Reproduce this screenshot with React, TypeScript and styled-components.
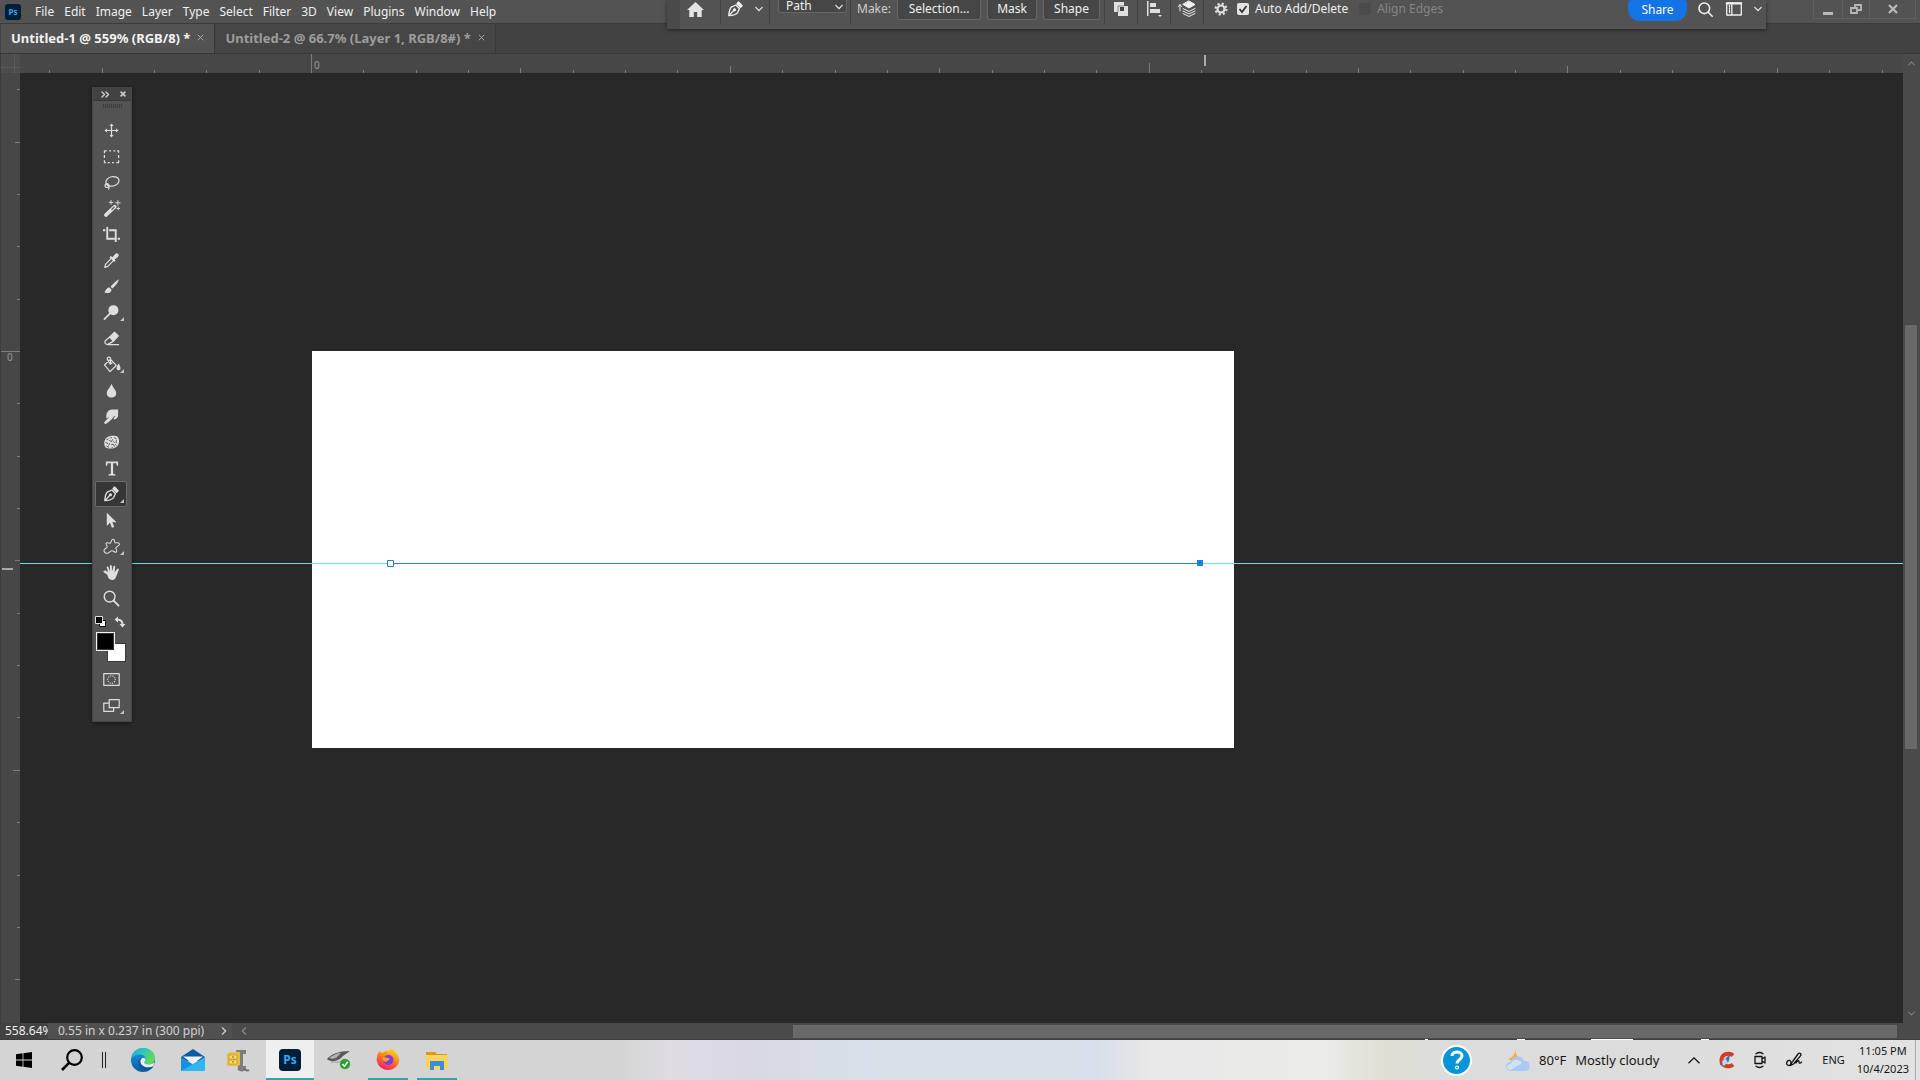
import React from "react";
import styled, { createGlobalStyle, css } from "styled-components";

const Global = createGlobalStyle`
  * { box-sizing: border-box; }
  html, body, #root { margin: 0; height: 100%; }
  body { overflow: hidden; background: #282828; font-family: "Noto Sans", "Segoe UI", sans-serif; }
  button, input, select { font: inherit; color: inherit; border: 0; padding: 0; margin: 0; background: none; }
  a { color: inherit; text-decoration: none; }
  svg { display: block; flex: none; overflow: visible; }
`;

const Desktop = styled.div`
  position: relative;
  display: flex;
  flex-direction: column;
  height: 100vh;
  font-size: 12px;
  line-height: 16px;
  color: #e8e8e8;
`;

const MenuBar = styled.header`
  display: flex;
  align-items: center;
  height: 24px;
  padding-left: 5px;
  background: #535353;
  border-bottom: 1px solid #3c3c3c;
`;

const PsBadge = styled.span<{ $size: number }>`
  display: flex;
  align-items: center;
  justify-content: center;
  width: ${(p) => p.$size}px;
  height: ${(p) => p.$size}px;
  border-radius: ${(p) => (p.$size > 18 ? 4 : 3)}px;
  background: #001e36;
  color: #31a8ff;
  font-weight: 700;
  font-size: ${(p) => (p.$size > 18 ? 12 : 8)}px;
  line-height: 1;
`;

const Menu = styled.nav`
  display: flex;
  gap: 10px;
  margin-left: 14px;
  button { white-space: nowrap; color: #f0f0f0; }
`;

const WindowButtons = styled.div`
  display: flex;
  align-self: flex-start;
  height: 19px;
  margin: 0 4px 0 auto;
  border: 1px solid #606060;
  border-top: 0;
`;

const WindowButton = styled.button<{ $w: number }>`
  display: flex;
  align-items: center;
  justify-content: center;
  width: ${(p) => p.$w}px;
  color: #b8b8b8;
  & + & { border-left: 1px solid #606060; }
`;

const Tabs = styled.div`
  display: flex;
  height: 30px;
  padding-left: 1px;
  background: #424242;
  border-bottom: 1px solid #383838;
`;

const Tab = styled.div<{ $active?: boolean }>`
  display: flex;
  align-items: center;
  gap: 7px;
  padding: 0 10px 2px;
  background: ${(p) => (p.$active ? "#535353" : "#454545")};
  color: ${(p) => (p.$active ? "#f2f2f2" : "#9d9d9d")};
  border-right: 1px solid #383838;
  font-size: 13px;
  font-weight: 700;
  white-space: nowrap;
`;

const TabClose = styled.button`
  display: flex;
  color: #b0b0b0;
`;

const OptionsBar = styled.section`
  position: absolute;
  z-index: 4;
  top: 0;
  left: 667px;
  right: 154px;
  display: flex;
  height: 29px;
  background: #535353;
  border-left: 13px solid #4a4a4a;
  box-shadow: 0 1px 4px rgba(0, 0, 0, 0.5);
  color: #f0f0f0;
`;

const Slot = styled.div<{ $w: number; $rule?: boolean; $start?: boolean }>`
  display: flex;
  align-items: center;
  justify-content: ${(p) => (p.$start ? "flex-start" : "center")};
  gap: 12px;
  width: ${(p) => p.$w}px;
  height: 24px;
  padding: 0 0 6px ${(p) => (p.$start ? 7 : 0)}px;
  flex: none;
  ${(p) => p.$rule && css`border-right: 1px solid #404040;`}
`;

const IconButton = styled.button`
  display: flex;
  align-items: center;
  justify-content: center;
`;

const PathSelect = styled.label`
  display: flex;
  align-items: flex-start;
  height: 24px;
  width: 81px;
  padding: 0 3px 0 8px;
  border-right: 1px solid #404040;
`;

const SelectFrame = styled.span`
  position: relative;
  display: flex;
  width: 69px;
  height: 13px;
  background: #464646;
  border: 1px solid #666;
  border-top: 0;
  border-radius: 0 0 3px 3px;
  select {
    appearance: none;
    width: 100%;
    height: 12px;
    padding-left: 7px;
    line-height: 12px;
    outline: 0;
  }
  svg { position: absolute; right: 3px; top: 3px; pointer-events: none; }
`;

const MakeGroup = styled.div`
  display: flex;
  align-items: flex-start;
  gap: 6px;
  width: 254px;
  height: 24px;
  padding-left: 6px;
  border-right: 1px solid #404040;
  color: #cfcfcf;
  line-height: 18px;
`;

const MakeButton = styled.button<{ $w: number }>`
  width: ${(p) => p.$w}px;
  height: 20px;
  padding-bottom: 2px;
  line-height: 18px;
  background: #464646;
  border: 1px solid #666;
  border-top: 0;
  border-radius: 0 0 3px 3px;
  color: #f0f0f0;
`;

const Check = styled.label<{ $off?: boolean }>`
  display: flex;
  align-items: center;
  gap: 6px;
  height: 18px;
  margin-right: 11px;
  white-space: nowrap;
  color: ${(p) => (p.$off ? "#858585" : "#f0f0f0")};
  input {
    appearance: none;
    width: 12px;
    height: 12px;
    border-radius: 2px;
    background: ${(p) => (p.$off ? "#4b4b4b" : "#e4e4e4")};
  }
  span { display: flex; position: relative; }
  svg { position: absolute; left: 1px; top: 1px; pointer-events: none; }
`;

const OptionsEnd = styled.div`
  display: flex;
  align-items: flex-start;
  margin-left: auto;
  padding-right: 2px;
`;

const Share = styled.button`
  width: 59px;
  height: 21px;
  padding-bottom: 2px;
  border-radius: 4px 4px 12px 12px;
  background: #1473e6;
  color: #fff;
`;

const Workspace = styled.main`
  flex: 1;
  min-height: 0;
  display: grid;
  grid-template: 19px 1fr / 20px 1fr 17px;
  background: #282828;
`;

const RulerCorner = styled.div`
  background: #4d4d4d;
  border-left: 1px solid #3c3c3c;
  svg { margin: 0 0 0 auto; }
`;

const TopRuler = styled.div`
  position: relative;
  overflow: hidden;
  background: #474747;
  color: #999;
  font-size: 10px;
  line-height: 12px;
  svg { position: absolute; inset: 0; }
`;

const LeftRuler = styled(TopRuler)`
  border-left: 1px solid #3c3c3c;
`;

const RulerLabel = styled.span<{ $x: number; $y: number }>`
  position: absolute;
  left: ${(p) => p.$x}px;
  top: ${(p) => p.$y}px;
`;

const Viewport = styled.div`
  position: relative;
  overflow: hidden;
`;

const Artboard = styled.div`
  position: absolute;
  left: 292px;
  top: 278px;
  width: 922px;
  height: 397px;
  background: #fff;
`;

const Guide = styled.div`
  position: absolute;
  left: 0;
  right: 0;
  top: 490px;
  height: 1px;
  background: #6be0e2;
`;

const PathOverlay = styled.svg`
  position: absolute;
  left: 366px;
  top: 486px;
`;

const VScroll = styled.div`
  grid-row: 1 / 3;
  grid-column: 3;
  position: relative;
  display: flex;
  flex-direction: column;
  align-items: center;
  justify-content: space-between;
  padding: 6px 0;
  background: #4a4a4a;
  color: #858585;
`;

const VThumb = styled.div`
  position: absolute;
  left: 2px;
  top: 271px;
  width: 12px;
  height: 424px;
  border-radius: 1px;
  background: #696969;
`;

const StatusBar = styled.footer`
  display: flex;
  align-items: center;
  height: 17px;
  background: #4a4a4a;
  border-bottom: 1px solid #3e3e3e;
  input {
    width: 48px;
    height: 16px;
    padding-left: 5px;
    background: #424242;
    color: #f0f0f0;
    outline: 0;
  }
`;

const DocInfo = styled.button`
  display: flex;
  align-items: center;
  gap: 16px;
  height: 16px;
  padding: 0 4px 0 10px;
  background: #505050;
  color: #d0d0d0;
  white-space: nowrap;
`;

const HTrack = styled.div`
  flex: 1;
  display: flex;
  align-items: center;
  padding: 0 23px 0 8px;
  color: #8c8c8c;
`;

const HThumb = styled.div`
  width: calc(100% * 2 / 3);
  height: 13px;
  margin-left: auto;
  background: #696969;
`;

const ToolPanel = styled.aside`
  position: absolute;
  z-index: 3;
  left: 92px;
  top: 87px;
  width: 40px;
  height: 635px;
  padding: 0 1px;
  background: #535353;
  border: 1px solid #474747;
  border-top: 0;
  box-shadow: 0 1px 4px rgba(0, 0, 0, 0.45);
  color: #dedede;
`;

const PanelHead = styled.div`
  display: flex;
  align-items: center;
  justify-content: space-between;
  height: 14px;
  margin: 0 -1px;
  padding: 1px 5px 0 8px;
  background: #424242;
  border-bottom: 1px solid #393939;
  color: #cfcfcf;
`;

const Grip = styled.div`
  width: 19px;
  height: 4px;
  margin: 3px auto 9px;
  background: repeating-linear-gradient(90deg, #3d3d3d 0 1px, #535353 1px 2px);
`;

const Tool = styled.button<{ $on?: boolean }>`
  position: relative;
  display: flex;
  align-items: center;
  justify-content: center;
  width: 32px;
  height: 26px;
  margin: 0 1px;
  border: 1px solid ${(p) => (p.$on ? "#6b6b6b" : "transparent")};
  border-radius: 2px;
  background: ${(p) => (p.$on ? "#363636" : "transparent")};
`;

const More = styled.i`
  position: absolute;
  right: 2px;
  bottom: 3px;
  border: 2px solid transparent;
  border-right-color: #c4c4c4;
  border-bottom-color: #c4c4c4;
`;

const ColorRow = styled.div`
  display: flex;
  justify-content: space-between;
  padding: 5px 4px 4px 1px;
`;

const Swatches = styled.div`
  display: grid;
  width: 30px;
  height: 30px;
  margin: 0 0 4px 2px;
`;

const Swatch = styled.button<{ $c: string; $back?: boolean }>`
  grid-area: 1 / 1;
  width: 19px;
  height: 19px;
  background: ${(p) => p.$c};
  border: 1px solid ${(p) => (p.$back ? "#3a3a3a" : "#f4f4f4")};
  outline: ${(p) => (p.$back ? "0" : "1px solid #333")};
  outline-offset: -2px;
  align-self: ${(p) => (p.$back ? "end" : "start")};
  justify-self: ${(p) => (p.$back ? "end" : "start")};
`;

const Taskbar = styled.footer`
  position: relative;
  display: flex;
  align-items: stretch;
  height: 40px;
  color: #151515;
  background: linear-gradient(
    90deg,
    #d4d4d4 0%, #d4d4d4 32%, #dfdce2 35%, #d9d8e4 39%, #d7e0ea 45%, #d9dfe9 50%,
    #d7dfea 57%, #e8e8e8 60%, #ebebe9 69%, #dfdfd3 72%, #dcdcdc 75%, #dcdcdc 85%, #e2e2e2 100%
  );
`;

const TaskItem = styled.button<{ $w: number; $active?: boolean; $line?: number }>`
  position: relative;
  display: flex;
  align-items: center;
  justify-content: center;
  width: ${(p) => p.$w}px;
  background: ${(p) => (p.$active ? "#efefef" : "transparent")};
  ${(p) => p.$line && css`
    &::after {
      content: "";
      position: absolute;
      left: calc(50% - ${p.$line / 2}px);
      bottom: 0;
      width: ${p.$line}px;
      height: 2px;
      background: #18aebc;
    }
  `}
`;

const Tray = styled.div`
  display: flex;
  align-items: center;
  margin-left: auto;
  font-size: 11px;
  white-space: nowrap;
`;

const HelpBubble = styled.a`
  display: flex;
  align-items: center;
  justify-content: center;
  width: 31px;
  height: 31px;
  margin-right: 34px;
  border: 2px solid #fff;
  border-radius: 50%;
  background: #0795d9;
`;

const Weather = styled.button`
  display: flex;
  align-items: center;
  gap: 9px;
  margin-right: 29px;
  font-size: 13px;
`;

const TrayIcon = styled.button<{ $w: number }>`
  display: flex;
  justify-content: center;
  width: ${(p) => p.$w}px;
`;

const Clock = styled.button`
  display: flex;
  flex-direction: column;
  align-items: center;
  height: 40px;
  margin-left: 12px;
  padding: 2px 6px 0 0;
  line-height: 18px;
  border-right: 1px solid #aaa;
`;

const EdgeMarks = styled.svg`
  position: absolute;
  right: 0;
  top: -1px;
`;

const stroke = { fill: "none", stroke: "currentColor", strokeWidth: 1.3, strokeLinecap: "round" as const, strokeLinejoin: "round" as const };

function Chevron({ dir = "down", size = 8 }: { dir?: "down" | "up" | "left" | "right"; size?: number }) {
  const turn = { down: 0, left: 90, up: 180, right: 270 }[dir];
  return (
    <svg width={size} height={size} viewBox="0 0 8 8" {...stroke} strokeWidth={1.2}>
      <path d="M.8 2.3 4 5.7l3.2-3.4" transform={`rotate(${turn} 4 4)`} />
    </svg>
  );
}

function Cross({ size = 7, weight = 1 }: { size?: number; weight?: number }) {
  return (
    <svg width={size} height={size} viewBox="0 0 8 8" stroke="currentColor" strokeWidth={weight} fill="none">
      <path d="m.8.8 6.4 6.4M7.2.8.8 7.2" />
    </svg>
  );
}

function PenNib({ size = 16 }: { size?: number }) {
  return (
    <svg width={size} height={size} viewBox="0 0 18 18" {...stroke} strokeWidth={1.5}>
      <path d="M2 16.500c.3-4.500 1.300-8.500 3.300-10L10 4.500l4 4-2 4.500c-1.700 2.200-5.500 3.200-10 3.500ZM2.300 16.200l5.500-5.800" />
      <circle cx="8.500" cy="9.800" r="1" fill="currentColor" />
      <path d="M11.300 3 13 1.200 17 5.300 15.300 7Z" fill="currentColor" />
    </svg>
  );
}

const toolArt: { name: string; more?: boolean; on?: boolean; art: React.ReactNode }[] = [
  { name: "Move", art: <><path d="M9 3v12M3 9h12" /><path d="m9 1.500 2.200 2.800H6.800ZM9 16.500l2.200-2.800H6.800ZM1.500 9l2.800-2.200v4.400ZM16.500 9l-2.800-2.200v4.400Z" fill="currentColor" stroke="none" /></> },
  { name: "Rectangular Marquee", art: <path d="M1.500 5.500V3H4M6.500 3h2M11 3h2M15 3h1.500v2M16.500 7.500v3M16.500 13v2.500H14M11.500 15.500h-2M7 15.500H5M3 15.500H1.500V13M1.500 10.500v-3" strokeLinecap="butt" /> },
  { name: "Lasso", art: <><ellipse cx="10" cy="7.800" rx="7" ry="5" transform="rotate(-12 10 7.800)" /><circle cx="4.200" cy="12.300" r="2" /><path d="M3.200 11c2.500.5 4 2 2.800 5" /></> },
  { name: "Magic Wand", art: <><path d="M3 16 12.500 7" strokeWidth="3.800" /><path d="m9.500 9.800 2.300-2.200" stroke="#535353" strokeWidth="1.300" /><path d="M8.500.5v4M6.500 2.500h4M15.800.5v5M13.300 3h5M16.200 7.500v3M14.700 9h3" strokeWidth="1" /></> },
  { name: "Crop", art: <path d="M4.500 1v12.500H14M0 4.500h2.500M6.500 4.500h7V17M15.500 13.500H18" strokeWidth="2" strokeLinecap="butt" strokeLinejoin="miter" /> },
  { name: "Eyedropper", art: <><path d="m10 5.500 3-3.500c2-2 5 1 3 3l-3.500 3 .8 1.200-1.500 1.300-5-5 1.500-1.300Z" fill="currentColor" stroke="none" /><path d="m8.800 6.700-6 6.200-.9 3.300 3.200-1 6.200-6.300" /></> },
  { name: "Brush", art: <><path d="M16.800 1.200c-2 .8-7 5.500-8.800 8l1.800 1.900c2.500-2 6.800-7 7-9.900Z" fill="currentColor" stroke="none" /><path d="M7 10.200c-3-.5-3.500 2.800-5.500 4.800 3.500 2.200 8 .5 7.300-3Z" fill="currentColor" stroke="none" /></> },
  { name: "Dodge", more: true, art: <><circle cx="11" cy="6.500" r="5.300" fill="currentColor" stroke="none" /><path d="m7.500 10-6 6" strokeWidth="1.800" /></> },
  { name: "Eraser", art: <><path d="m7 7.500 5.200-5.200 4 4-5.200 5.500Z" fill="currentColor" /><path d="M7 7.500 2.200 11.700c-1.200 1.500 1 3.800 2.600 3.800L11 11.800M5 15.500h11.500" /></> },
  { name: "Paint Bucket", more: true, art: <><path d="m1.500 9.500 6.500-6 6 6.500-6.500 6.500ZM8 8.500V3c0-2.500-3.500-2.500-3.500 0l3 5.500 2-1" /><path d="M16.500 9c2 3 2 5.500 0 5.500s-2-2.500 0-5.500Z" fill="currentColor" /></> },
  { name: "Blur", art: <path d="M9 1.500c.8 4 5 6.500 5 10.300 0 6.200-10 6.200-10 0C4 8 8.200 5.500 9 1.500Z" fill="currentColor" stroke="none" /> },
  { name: "Smudge", art: <path d="M3.500 7.500C4 3.500 6.500 1.500 10 1.500h6V8c0 2-2 4-4 4.200l-1-.7 2-2.700-.8-.6-3.700 4.500-4.700 3.800c-1.600 1.200-3.300-.5-2-2L6.500 9.500 3.500 11Z" fill="currentColor" stroke="none" /> },
  { name: "Sponge", art: <><path d="M4.500 3.500C8 1.500 13 1.500 15.500 3c2.200 2.500 2 7.500-.5 10-3 2.800-9 3.500-12.500 1C.5 11 1 5.500 4.500 3.500Z" fill="currentColor" stroke="none" /><path d="M4 6h1l1-1M8 4h1M12 4l2 1M3 9l2 1M7 7l2 1 1-2M14 7v2M6 12l1-2M9 11h2l1 2M4 13l2 1M9 15l1-1M14 12l-1-1M11 8l1 1" stroke="#535353" strokeWidth="1" /></> },
  { name: "Type", art: <path d="M3 1.500h13V6h-1.300L14 3.500h-3.300v11l2.300.5v1.300H6V15l2.300-.5v-11H5L4.300 6H3Z" fill="currentColor" stroke="none" /> },
  { name: "Pen", more: true, on: true, art: null },
  { name: "Path Selection", art: <path d="M4 .8v14l3.400-3.300 2 5.300 2.600-1-2.200-5h4.500Z" fill="currentColor" stroke="none" /> },
  { name: "Custom Shape", more: true, art: <path d="M10 1.500c2-.7 2.300 2 2.600 3.500 1.500.5 4.800-.7 4.800 1.500 0 2-3.500 2.500-3.800 4 0 1.500 2 3.500.5 4.500s-3.300-2-5-1.500-3 3.200-5.500 2.700S.5 13 1.500 12s3-1.500 3-3S2 6.500 3.500 5.300s3 .7 4.200.2S8.500 2 10 1.500Z" strokeWidth="1.100" /> },
  { name: "Hand", art: <path d="M4.500 11.500.8 8.800C-.2 7.600 1.300 6.300 2.500 7l2.800 1.500L4 3.800c-.2-1.300 1.500-1.500 1.800-.3L7.500 8 7.300 2c0-1.300 1.800-1.300 1.900 0l.6 5.800 1.300-5.300c.3-1.200 2-.8 1.800.4l-.6 5.800 2.500-3.200c.8-1.200 2.500-.5 1.800 1l-2.300 6c-.8 2.500-2 4.500-4.500 4.500-3 0-4.500-2.500-5.300-5.500Z" fill="currentColor" stroke="none" /> },
  { name: "Zoom", art: <><circle cx="7" cy="7" r="5.700" strokeWidth="1.500" /><path d="m11.500 11.500 5 5" strokeWidth="2" /></> },
];

function rulerTicks(start: number, origin: number, end: number) {
  const step = 52.35;
  const list: { at: number; len: number }[] = [];
  for (let n = Math.ceil((start - origin) / step); origin + n * step < end; n++) {
    const len = n === 0 ? 19 : n % 16 === 0 ? 10 : n % 8 === 0 ? 7 : n % 4 === 0 ? 5 : 3;
    list.push({ at: Math.round(origin + n * step), len });
  }
  return list;
}

function PhotoshopTools() {
  return (
    <ToolPanel aria-label="Tools">
      <PanelHead>
        <IconButton aria-label="Expand panel">
          <svg width="9" height="7" viewBox="0 0 9 7" {...stroke} strokeWidth={1.4}><path d="m1 1 2.500 2.500L1 6M5 1l2.500 2.500L5 6" /></svg>
        </IconButton>
        <IconButton aria-label="Close panel"><Cross size={6} weight={2} /></IconButton>
      </PanelHead>
      <Grip />
      {toolArt.map((t) => (
        <Tool key={t.name} $on={t.on} aria-label={t.name} title={t.name}>
          {t.art ? <svg width="17" height="17" viewBox="0 0 18 18" {...stroke}>{t.art}</svg> : <PenNib />}
          {t.more && <More />}
        </Tool>
      ))}
      <ColorRow>
        <IconButton aria-label="Default colors">
          <svg width="12" height="12" viewBox="0 0 12 12"><path d="M4.500 4.500h6v6h-6Z" fill="#fff" stroke="#111" /><path d="M.5.5h7v7h-7Z" fill="#000" stroke="#ddd" /></svg>
        </IconButton>
        <IconButton aria-label="Swap colors">
          <svg width="12" height="12" viewBox="0 0 12 12" {...stroke}><path d="M3 3.500c4 0 5.500 1.500 5.500 5" strokeWidth="2" /><path d="M.5 3.500 4 .5v6ZM8.500 11.500l-3-3.500h6Z" fill="currentColor" stroke="none" /></svg>
        </IconButton>
      </ColorRow>
      <Swatches>
        <Swatch $c="#fff" $back aria-label="Background color" />
        <Swatch $c="#000" aria-label="Foreground color" />
      </Swatches>
      <Tool aria-label="Quick Mask">
        <svg width="17" height="13" viewBox="0 0 18 14" {...stroke}><path d="M.7.7h16.600v12.600H.7Z" /><circle cx="9" cy="7" r="4" strokeDasharray=".2 2.300" /></svg>
      </Tool>
      <Tool aria-label="Screen Mode">
        <svg width="17" height="13" viewBox="0 0 18 14" {...stroke}><path d="M6.500.7h10.800v8.600H6.500ZM5.500 4.500H.7v8.800h10.600V10" /></svg>
        <More />
      </Tool>
    </ToolPanel>
  );
}

function PhotoshopOptions() {
  return (
    <OptionsBar aria-label="Tool options">
      <Slot $w={41} $rule $start>
        <IconButton aria-label="Home">
          <svg width="17" height="15" viewBox="0 0 17 15"><path d="M8.500 0 0 8h2.300v7h4.500v-5h3.400v5h4.500V8H17Z" fill="#e4e4e4" /></svg>
        </IconButton>
      </Slot>
      <Slot $w={49} $rule>
        <PenNib />
        <Chevron />
      </Slot>
      <PathSelect>
        <SelectFrame>
          <select aria-label="Tool mode" defaultValue="Path"><option>Path</option><option>Shape</option></select>
          <Chevron />
        </SelectFrame>
      </PathSelect>
      <MakeGroup>
        <span>Make:</span>
        <MakeButton $w={84}>Selection...</MakeButton>
        <MakeButton $w={50}>Mask</MakeButton>
        <MakeButton $w={57}>Shape</MakeButton>
      </MakeGroup>
      <Slot $w={33} $rule>
        <IconButton aria-label="Path operations">
          <svg width="15" height="15" viewBox="0 0 15 15"><path d="M0 0h10v4h4v10H4v-4H0Z" fill="#e0e0e0" /><path d="M6 5h4v4H6Z" fill="#444" /><path d="M4 10V4h6" fill="none" stroke="#888" /></svg>
        </IconButton>
      </Slot>
      <Slot $w={33} $rule>
        <IconButton aria-label="Path alignment">
          <svg width="15" height="16" viewBox="0 0 15 16" fill="#e0e0e0"><path d="M0 0h1.500v15H0ZM3 2h6v4H3ZM3 8h10v4H3ZM11 14h4l-2 2Z" /></svg>
        </IconButton>
      </Slot>
      <Slot $w={33} $rule>
        <IconButton aria-label="Path arrangement">
          <svg width="18" height="17" viewBox="0 0 18 17" {...stroke} strokeWidth={1}><path d="M2 10V4M.5 5.500 2 3.500l1.500 2M5 10l6 3 6-3M5 12.500l6 3 6-3M5 7.500l6 3 6-3" /><path d="m11 0 6 3.500L11 7 5 3.500Z" fill="currentColor" /></svg>
        </IconButton>
      </Slot>
      <Slot $w={33}>
        <IconButton aria-label="Path options">
          <svg width="14" height="14" viewBox="0 0 16 16" fill="none" stroke="#e0e0e0"><circle cx="8" cy="8" r="4" strokeWidth="2.500" /><circle cx="8" cy="8" r="6.200" strokeWidth="2.500" strokeDasharray="2.400 2.470" /></svg>
        </IconButton>
      </Slot>
      <Check>
        <span>
          <input type="checkbox" defaultChecked aria-label="Auto Add/Delete" />
          <svg width="10" height="10" viewBox="0 0 10 10" fill="none" stroke="#333" strokeWidth="1.800"><path d="m1.500 5 2.500 3 4.500-6" /></svg>
        </span>
        Auto Add/Delete
      </Check>
      <Check $off>
        <input type="checkbox" disabled />
        Align Edges
      </Check>
      <OptionsEnd>
        <Share>Share</Share>
        <Slot $w={37}>
          <IconButton aria-label="Search">
            <svg width="15" height="15" viewBox="0 0 15 15" {...stroke} strokeWidth={1.6}><circle cx="6.300" cy="6.300" r="5.300" /><path d="m10.200 10.200 4 4" /></svg>
          </IconButton>
        </Slot>
        <Slot $w={40}>
          <IconButton aria-label="Workspace">
            <svg width="16" height="14" viewBox="0 0 16 14" {...stroke}><path d="M.7 1h14.600v12H.7Z" /><path d="M3.500 3.500v1M3.500 6v1M3.500 8.500v2M5.800 1v12" /><path d="M.7 1.500h14.600" strokeWidth="2" /></svg>
          </IconButton>
          <Chevron />
        </Slot>
      </OptionsEnd>
    </OptionsBar>
  );
}

function WindowsTaskbar() {
  return (
    <Taskbar>
      <EdgeMarks width="500" height="2" viewBox="0 0 500 2" fill="#fff"><path d="M5 0h3v1H5ZM97 0h8v1h-8ZM171 0h42v1h-42ZM281 0h8v1h-8Z" /></EdgeMarks>
      <TaskItem $w={48} aria-label="Start">
        <svg width="16" height="16" viewBox="0 0 16 16" fill="#000"><path d="M0 2.200 6.600 1.300v6.200H0ZM7.400 1.200 16 0v7.500H7.400ZM0 8.400h6.600v6.300L0 13.800ZM7.400 8.400H16V16l-8.600-1.200Z" /></svg>
      </TaskItem>
      <TaskItem $w={48} aria-label="Search">
        <svg width="22" height="22" viewBox="0 0 22 22" fill="none" stroke="#000" strokeWidth="2.200"><circle cx="13.500" cy="8.500" r="7.300" /><path d="M8.300 13.700 1 21" strokeWidth="2.600" /></svg>
      </TaskItem>
      <TaskItem $w={16} aria-label="Task view">
        <svg width="4" height="16" viewBox="0 0 4 16" fill="#222"><path d="M0 0h1v16H0ZM3 0h1v16H3Z" /></svg>
      </TaskItem>
      <TaskItem $w={62} aria-label="Microsoft Edge">
        <svg width="24" height="24" viewBox="0 0 24 24">
          <defs>
            <linearGradient id="edgeTop" x1="0" y1="0" x2="1" y2=".4"><stop offset="0" stopColor="#2aa7de" /><stop offset=".5" stopColor="#2fc6b8" /><stop offset="1" stopColor="#62d957" /></linearGradient>
            <linearGradient id="edgeLow" x1="0" y1="0" x2="0" y2="1"><stop offset="0" stopColor="#1b9de2" /><stop offset="1" stopColor="#0c59a4" /></linearGradient>
          </defs>
          <circle cx="12" cy="12" r="12" fill="url(#edgeLow)" />
          <path d="M.1 11C1 4.500 6 0 12.300 0 19 0 24 4.700 24 10.200c0 3.600-2.700 6.200-6.200 6.200-2.800 0-4.500-1-4.500-2 0-.8 1.200-1.200 1.200-3.200C14.500 8.500 12 6.500 8.500 6.500 4.500 6.500 1.500 8.500.1 11Z" fill="url(#edgeTop)" />
          <path d="M8.500 11c-3 3.300-.8 9.800 5 11.200 3.400.8 6.500-.8 9-3.800-6 2.500-12.300.5-13-4.400-.2-1.500.5-3 1.500-3.800-1-.2-1.800.1-2.500.8Z" fill="#1256a3" />
          <path d="M13.300 14.400c0 1 1.700 2 4.500 2 2.300 0 3.900-.7 5-2 .5 2-.2 3.500-1.300 4.200-5.500 1.800-11.500-.2-12-4.600-.2-2 .8-3.500 2.300-4.200 1.800 0 2.700.9 2.700 2.200 0 1-1.200 1.600-1.200 2.400Z" fill="#e6f2f6" />
        </svg>
      </TaskItem>
      <TaskItem $w={37} aria-label="Mail">
        <svg width="24" height="22" viewBox="0 0 24 22"><path d="M0 8 12 0l12 8v4H0Z" fill="#0c59a4" /><path d="M2 7.500h20L12 15Z" fill="#f5f5f5" /><path d="M0 8v14h24V8l-12 7.500Z" fill="#1d8fdf" /><path d="M0 22 24 8v14Z" fill="#31b5ee" /></svg>
      </TaskItem>
      <TaskItem $w={55} aria-label="Archive manager">
        <svg width="23" height="23" viewBox="0 0 23 23"><path d="M9 1h10v4h-3v12h3v3h-8Z" fill="#7d7d7b" /><path d="M11 21c2-2 3 2 5 0s3 2 6 0" stroke="#707070" strokeWidth="2" fill="none" /><path d="M0 5l3-2h10v13l-2 1H0Z" fill="#e9bd43" /><path d="M2 6h8v4H2ZM2 11h8v4H2Z" fill="#f6da73" stroke="#b98d22" strokeWidth=".6" /><path d="M5 8h2M5 13h2" stroke="#8d6a13" /></svg>
      </TaskItem>
      <TaskItem $w={48} $active $line={48} aria-label="Photoshop"><PsBadge $size={22}>Ps</PsBadge></TaskItem>
      <TaskItem $w={50} aria-label="Device sync">
        <svg width="24" height="20" viewBox="0 0 24 20"><path d="M0 9C4 4 12 1 23 1l-7 5c-4 5-12 7-16 3Z" fill="#595959" /><path d="M2 8c4-3 8-5 12-5l-4 4c-2 2-5 2-8 1Z" fill="#b3b3b3" /><path d="M4 12h10" stroke="#999" /><circle cx="18" cy="14" r="5.500" fill="#2c9c31" stroke="#c8e6c9" strokeWidth=".7" /><path d="m15.500 14 2 2.200 3.300-4.400" stroke="#fff" strokeWidth="1.600" fill="none" /></svg>
      </TaskItem>
      <TaskItem $w={48} $line={40} aria-label="Firefox">
        <svg width="24" height="24" viewBox="0 0 24 24">
          <defs><linearGradient id="fox" x1=".8" y1="0" x2=".3" y2="1"><stop offset="0" stopColor="#ffe226" /><stop offset=".45" stopColor="#ff8a16" /><stop offset="1" stopColor="#f5156c" /></linearGradient></defs>
          <path d="M2 5.500 4 2.500l1 2.500 3-1c1-.5 2-1.500 3.500-1.500l1 1.500L14 0c5 3 9.300 6.500 9.300 13A11.500 11.500 0 0 1 .8 13C.6 10 1 7.500 2 5.500Z" fill="url(#fox)" />
          <circle cx="12.500" cy="12" r="5" fill="#7a3be6" /><path d="M6.500 10c2.500-1.500 5 0 7.500 1-1 2-3.500 1.500-4 3-2-.5-3.500-2-3.500-4Z" fill="#ff9a1f" />
        </svg>
      </TaskItem>
      <TaskItem $w={50} $line={40} aria-label="File Explorer">
        <svg width="22" height="19" viewBox="0 0 22 19"><path d="M0 1h9l2 2h10v4H0Z" fill="#d99a1c" /><path d="M0 4h22v14H0Z" fill="#fbd35f" /><path d="M4 10h14v9h-4v-4H8v4H4Z" fill="#3c8ed0" /></svg>
      </TaskItem>
      <Tray>
        <HelpBubble href="#help" aria-label="Help">
          <svg width="14" height="20" viewBox="0 0 14 20" fill="none" stroke="#fff" strokeWidth="3"><path d="M2 6c0-5.500 10-5.500 10 0 0 3.500-5 3.500-5 7.500" /><circle cx="7" cy="17.500" r=".6" /></svg>
        </HelpBubble>
        <Weather>
          <svg width="24" height="23" viewBox="0 0 24 23"><path d="M10 0c-1 5 1 8 5 9-3 4-10 3-13 1 5-1 7-5 8-10Z" fill="#f8ab2b" /><path d="M6 22c-8 0-8-9-1-9 1-7 11-7 13-1 7-1 8 10 0 10Z" fill="#a9c8f5" /><path d="M5 21c-6-1-5-6 0-6 2-6 9-5 11-1" fill="#cfe0fb" /></svg>
          <span>80°F</span>
          <span>Mostly cloudy</span>
        </Weather>
        <TrayIcon $w={12} aria-label="Show hidden icons">
          <svg width="12" height="7" viewBox="0 0 12 7" fill="none" stroke="#111" strokeWidth="1.300"><path d="m.5 6.300 5.500-5.500 5.500 5.500" /></svg>
        </TrayIcon>
        <TrayIcon $w={54} aria-label="Cleaner">
          <svg width="16" height="16" viewBox="0 0 16 16" fill="none"><path d="M14 3.500C11 .5 3 1 2.500 8S11 15.500 14 12.500" stroke="#d83a26" strokeWidth="4" /><path d="m7 6 4-4-1 7-4 5-5-1Z" fill="#2d78b4" /><path d="m3 9 4-2 2 4-5 3Z" fill="#c5d6e2" /></svg>
        </TrayIcon>
        <TrayIcon $w={12} aria-label="Meet Now">
          <svg width="12" height="16" viewBox="0 0 12 16" {...stroke} stroke="#111"><path d="M1 4.500h7v7H1ZM8 7l3-2v6L8 9M2 1.800c2-1.500 5-1.500 7 0M2 14.200c2 1.500 5 1.500 7 0" /></svg>
        </TrayIcon>
        <TrayIcon $w={56} aria-label="Windows Ink">
          <svg width="16" height="16" viewBox="0 0 16 16" {...stroke} stroke="#111"><path d="M4 8.500c-4-.5-4.500 5-1 5 3 0 2-3 4-4.500L12 2c1.500-1.800 4 0 2.500 1.800L7.500 12l-3 1.500L5 10ZM10 11c2-3 3-3 3-1s2 1 2.500 0" /></svg>
        </TrayIcon>
        <span>ENG</span>
        <Clock>
          <span>11:05 PM</span>
          <span>10/4/2023</span>
        </Clock>
        <TrayIcon $w={4} aria-label="Show desktop" />
      </Tray>
    </Taskbar>
  );
}

export default function App() {
  const menus = ["File", "Edit", "Image", "Layer", "Type", "Select", "Filter", "3D", "View", "Plugins", "Window", "Help"];
  return (
    <>
      <Global />
      <Desktop>
        <MenuBar>
          <PsBadge $size={16}>Ps</PsBadge>
          <Menu>{menus.map((m) => <button key={m}>{m}</button>)}</Menu>
          <WindowButtons>
            <WindowButton $w={28} aria-label="Minimize">
              <svg width="10" height="12" viewBox="0 0 10 12"><path d="M0 9h10v3H0Z" fill="currentColor" /></svg>
            </WindowButton>
            <WindowButton $w={27} aria-label="Restore">
              <svg width="12" height="10" viewBox="0 0 12 10" fill="none" stroke="currentColor" strokeWidth="1.800"><path d="M1 4h6v5H1ZM5 4V1h6v5H8" /></svg>
            </WindowButton>
            <WindowButton $w={46} aria-label="Close"><Cross size={10} weight={1.8} /></WindowButton>
          </WindowButtons>
        </MenuBar>
        <Tabs>
          <Tab $active>Untitled-1 @ 559% (RGB/8) *<TabClose aria-label="Close Untitled-1"><Cross /></TabClose></Tab>
          <Tab>Untitled-2 @ 66.7% (Layer 1, RGB/8#) *<TabClose aria-label="Close Untitled-2"><Cross /></TabClose></Tab>
        </Tabs>
        <Workspace>
          <RulerCorner>
            <svg width="19" height="19" stroke="#666" strokeDasharray="1 1"><path d="M13.500 0v19M0 13.500h19" /></svg>
          </RulerCorner>
          <TopRuler>
            <svg width="100%" height="19">
              {rulerTicks(0, 291, 1883).map((t) => <path key={t.at} d={`M${t.at}.500 ${19 - t.len}V19`} stroke="#7c7c7c" />)}
              <path d="M1185 1v11" stroke="#aaa" strokeWidth="2" />
            </svg>
            <RulerLabel $x={294} $y={5}>0</RulerLabel>
          </TopRuler>
          <LeftRuler>
            <svg width="19" height="100%">
              {rulerTicks(0, 278, 950).map((t) => <path key={t.at} d={`M${19 - t.len} ${t.at}.500H19`} stroke="#7c7c7c" />)}
              <path d="M1 496h11" stroke="#aaa" strokeWidth="2" />
            </svg>
            <RulerLabel $x={6} $y={278}>0</RulerLabel>
          </LeftRuler>
          <Viewport>
            <Artboard />
            <Guide />
            <PathOverlay width="820" height="9" viewBox="0 0 820 9">
              <path d="M7 4.500h804" stroke="#2d7fd0" />
              <path d="M1.500 1.500h6v6h-6Z" fill="#fff" stroke="#2d7fd0" />
              <path d="M811 1h6v6h-6Z" fill="#1c7fe6" />
            </PathOverlay>
          </Viewport>
          <VScroll>
            <Chevron dir="up" size={7} />
            <VThumb />
            <Chevron size={7} />
          </VScroll>
        </Workspace>
        <StatusBar>
          <input aria-label="Zoom level" defaultValue="558.64%" />
          <DocInfo>0.55 in x 0.237 in (300 ppi)<Chevron dir="right" /></DocInfo>
          <HTrack><Chevron dir="left" /><HThumb /></HTrack>
        </StatusBar>
        <WindowsTaskbar />
        <PhotoshopOptions />
        <PhotoshopTools />
      </Desktop>
    </>
  );
}
